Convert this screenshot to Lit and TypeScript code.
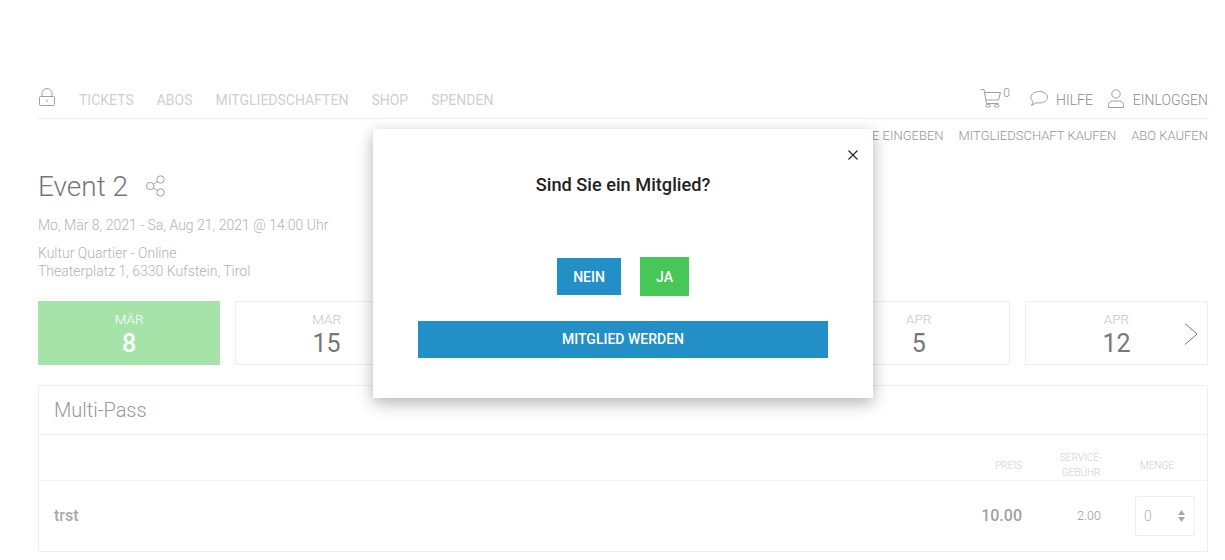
import { LitElement, html, css, svg } from "lit";
import { customElement } from "lit/decorators.js";

const ICON = "fill:none;stroke:#a0a0a0;stroke-width:1";

@customElement("app-root")
export class AppRoot extends LitElement {
  static styles = css`
    :host { display: block; width: 1225px; height: 560px; position: relative; overflow: hidden; background: #fff; font-family: Roboto, sans-serif; color: #777; }
    .page { padding: 85px 17px 0 38px; }
    .nav { display: flex; align-items: center; height: 33px; border-bottom: 1px solid #eee; box-sizing: content-box; }
    .lock { width: 18px; height: 20px; margin-right: 23px; margin-top: -9px; }
    .links { display: flex; gap: 23px; font-size: 14px; color: #cfcfcf; margin-top: -4px; }
    .right { margin-left: auto; display: flex; align-items: center; font-size: 14px; font-weight: 300; color: #8c8c8c; margin-top: -4px; }
    .cart { width: 22px; height: 20px; margin-right: 1px; margin-top: -3px; }
    .zero { font-size: 12px; font-weight: 300; align-self: flex-start; margin-right: 20px; margin-top: -5px; }
    .chat { width: 18px; height: 17px; margin-right: 8px; margin-top: -2px; }
    .user { width: 17px; height: 19px; margin: -2px 8px 0 15px; }
    .sub { display: flex; justify-content: flex-end; gap: 15px; font-size: 13px; font-weight: 300; color: #959595; height: 32px; align-items: center; }
    .title { display: flex; align-items: center; margin-top: 17px; height: 36px; font-size: 28px; font-weight: 300; color: #777; }
    .share { width: 20px; height: 22px; margin-left: 18px; }
    .info { font-size: 14px; font-weight: 300; color: #b2b2b2; line-height: 18px; }
    .date { margin-top: 12px; }
    .addr { margin-top: 10px; }
    .days { display: grid; grid-template-columns: repeat(5, 182.4px) 183px; gap: 15px; margin-top: 21px; }
    .day { position: relative; height: 64px; box-sizing: border-box; border: 1px solid #eee; display: flex; flex-direction: column; align-items: center; padding-top: 9px; }
    .day .m { font-size: 13.500px; font-weight: 300; color: #c4c4c4; line-height: 16px; margin-bottom: 2px; }
    .day .d { font-size: 25px; font-weight: 400; color: #777; line-height: 30px; }
    .day.on { background: #a5e3a8; border-color: #a5e3a8; }
    .day.on .m { color: #fff; }
    .day.on .d { color: #fff; font-weight: 500; }
    .next { position: absolute; right: 9px; top: 20px; width: 14px; height: 24px; }
    .panel { margin-top: 20px; border: 1px solid #eee; border-radius: 1px; }
    .phead { height: 48px; box-sizing: border-box; padding: 0 0 0 15px; display: flex; align-items: center; font-size: 20px; font-weight: 300; color: #999; }
    .rule { height: 1px; background: #eee; }
    .cols { height: 46px; box-sizing: border-box; padding-top: 15px; display: grid; grid-template-columns: 1fr 60px 113px 72px; align-items: center; border-bottom: 1px solid #f2f2f2; font-size: 10px; font-weight: 300; color: #cdcdcd; line-height: 15px; }
    .cols .p { text-align: right; grid-column: 2; }
    .cols .s { text-align: center; padding-left: 5px; }
    .cols .g { text-align: center; padding-right: 28px; }
    .row { height: 70px; display: grid; grid-template-columns: 1fr 60px 113px 72px; align-items: center; }
    .row .n { padding-left: 15px; margin-top: -2px; font-size: 16px; font-weight: 500; color: #a9a9a9; }
    .row .pr { grid-column: 2; margin-top: -2px; text-align: right; font-size: 16px; font-weight: 500; color: #a0a0a0; white-space: nowrap; }
    .row .sv { text-align: center; margin-top: -2px; padding-left: 21px; font-size: 12.500px; font-weight: 300; color: #999; }
    .sel { width: 60px; height: 40px; box-sizing: border-box; border: 1px solid #eee; border-radius: 2px; display: flex; align-items: center; justify-content: space-between; padding: 0 9px 0 8px; font-size: 14px; font-weight: 300; color: #b5b5b5; }
    .arrows { width: 7px; height: 12px; }
    .modal { position: absolute; left: 373px; top: 129px; width: 500px; height: 269px; background: #fff; box-shadow: 0 5px 15px rgba(0,0,0,.3); box-sizing: border-box; padding: 45px 45px 0; display: flex; flex-direction: column; align-items: center; }
    .close { position: absolute; right: 15px; top: 21px; width: 10px; height: 10px; }
    h2 { margin: 0; font-size: 18.200px; font-weight: 500; color: #222; line-height: 22px; }
    .choice { display: flex; align-items: center; gap: 19px; margin-top: 61px; }
    button { border: 0; border-radius: 0; font: 500 14px Roboto, sans-serif; color: #fff; padding: 0; display: block; }
    .nein { width: 64px; height: 37px; background: #228fc7; }
    .ja { width: 49px; height: 39px; background: #47c757; }
    .wide { width: 410px; height: 37px; padding-bottom: 2px; background: #228fc7; margin-top: 25px; }
  `;

  private day(m: string, d: string, on = false, next = false) {
    return html`<div class="day ${on ? "on" : ""}">
      <span class="m">${m}</span><span class="d">${d}</span>
      ${next ? html`<svg class="next" viewBox="0 0 14 24"><path d="M1 1.500 13 12 1 22.500" fill="none" stroke="#777" stroke-width="1"/></svg>` : ""}
    </div>`;
  }

  render() {
    return html`
      <div class="page">
        <div class="nav">
          <svg class="lock" viewBox="0 0 18 20" style=${ICON}>
            <rect x="1.500" y="9.500" width="15" height="9" rx="1"/>
            <path d="M4 9.500V6.500a5 5 0 0 1 10 0v3M9 12.500v2.500"/>
          </svg>
          <div class="links"><span>TICKETS</span><span>ABOS</span><span>MITGLIEDSCHAFTEN</span><span>SHOP</span><span>SPENDEN</span></div>
          <div class="right">
            <svg class="cart" viewBox="0 0 22 20" style=${ICON}>
              <path d="M.5 1.500h3.500l2.500 14h12M4.500 4.500h16l-2 7.500H6"/>
              <rect x="6" y="16.500" width="4.500" height="2.500" rx="1.200"/><rect x="14.500" y="16.500" width="4.500" height="2.500" rx="1.200"/>
            </svg>
            <span class="zero">0</span>
            <svg class="chat" viewBox="0 0 18 17" style=${ICON}>
              <path d="M9.500 1.500c4.300 0 8 2.400 8 5.700s-3.700 5.800-8 5.800c-1 0-2-.1-2.900-.4L1.500 15.500l1.800-3.800C1.800 10.600.9 9 .9 7.200c0-3.300 4.300-5.700 8.600-5.700z"/>
            </svg>
            <span>HILFE</span>
            <svg class="user" viewBox="0 0 17 19" style=${ICON}>
              <circle cx="8" cy="5" r="4.200"/>
              <path d="M.5 18.500v-3c0-2 2-3.500 4-3.500h7c2 0 4 1.500 4 3.500v3z"/>
            </svg>
            <span>EINLOGGEN</span>
          </div>
        </div>
        <div class="sub"><span>CODE EINGEBEN</span><span>MITGLIEDSCHAFT KAUFEN</span><span>ABO KAUFEN</span></div>
        <div class="title">Event 2
          <svg class="share" viewBox="0 0 20 22" style=${ICON}>
            <circle cx="14.500" cy="4.500" r="3.700"/><circle cx="4.200" cy="11" r="3.700"/><circle cx="14.500" cy="17.500" r="3.700"/>
            <path d="M7.500 9 11.300 6.500M7.500 13 11.300 15.500"/>
          </svg>
        </div>
        <div class="info date">Mo, Mär 8, 2021 - Sa, Aug 21, 2021 @ 14:00 Uhr</div>
        <div class="info addr">Kultur Quartier - Online<br />Theaterplatz 1, 6330 Kufstein, Tirol</div>
        <div class="days">
          ${this.day("MÄR", "8", true)}${this.day("MÄR", "15")}${this.day("MÄR", "22")}
          ${this.day("MÄR", "29")}${this.day("APR", "5")}${this.day("APR", "12", false, true)}
        </div>
        <div class="panel">
          <div class="phead">Multi-Pass</div>
          <div class="rule"></div>
          <div class="cols"><span class="p">PREIS</span><span class="s">SERVICE-<br />GEBÜHR</span><span class="g">MENGE</span></div>
          <div class="row">
            <span class="n">trst</span><span class="pr">10.00</span><span class="sv">2.00</span>
            <div class="sel"><span>0</span>
              <svg class="arrows" viewBox="0 0 7 12">${svg`<path d="M3.500 0 7 5H0zM3.500 12 0 7h7z" fill="#a8a8a8"/>`}</svg>
            </div>
          </div>
        </div>
      </div>
      <div class="modal">
        <svg class="close" viewBox="0 0 10 10"><path d="M.5.5l9 9M9.500.5l-9 9" stroke="#222" stroke-width="1.100" fill="none"/></svg>
        <h2>Sind Sie ein Mitglied?</h2>
        <div class="choice"><button class="nein">NEIN</button><button class="ja">JA</button></div>
        <button class="wide">MITGLIED WERDEN</button>
      </div>
    `;
  }
}
